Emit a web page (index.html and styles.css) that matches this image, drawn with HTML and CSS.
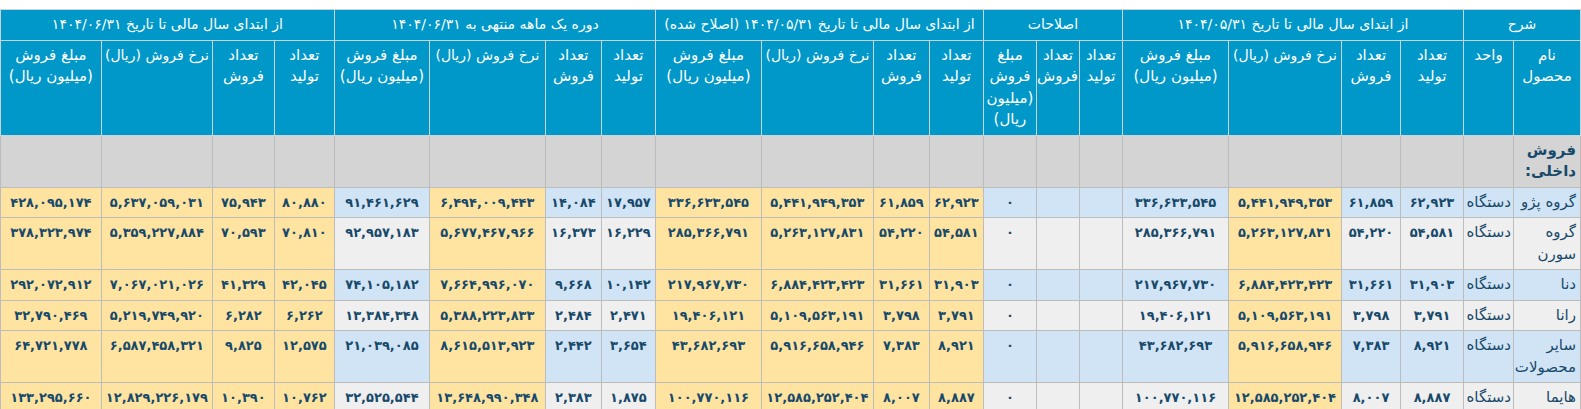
FILE: index.html
```html
<!DOCTYPE html>
<html lang="fa" dir="rtl">
<head>
<meta charset="utf-8">
<link rel="stylesheet" href="styles.css">
</head>
<body>
<div class="wrap">
<table class="sheet">
<colgroup>
<col style="width:67px"><col style="width:50px">
<col style="width:63px"><col style="width:59px"><col style="width:113px"><col style="width:106px">
<col style="width:43px"><col style="width:43px"><col style="width:53px">
<col style="width:54px"><col style="width:56px"><col style="width:112px"><col style="width:106px">
<col style="width:54px"><col style="width:56px"><col style="width:116px"><col style="width:95px">
<col style="width:60px"><col style="width:62px"><col style="width:111px"><col style="width:101px">
</colgroup>
<thead>
<tr class="h1">
<th colspan="2">شرح</th>
<th colspan="4">از ابتدای سال مالی تا تاریخ ۱۴۰۴/۰۵/۳۱</th>
<th colspan="3">اصلاحات</th>
<th colspan="4">از ابتدای سال مالی تا تاریخ ۱۴۰۴/۰۵/۳۱ (اصلاح شده)</th>
<th colspan="4">دوره یک ماهه منتهی به ۱۴۰۴/۰۶/۳۱</th>
<th colspan="4">از ابتدای سال مالی تا تاریخ ۱۴۰۴/۰۶/۳۱</th>
</tr>
<tr class="h2">
<th>نام محصول</th><th>واحد</th>
<th>تعداد تولید</th><th>تعداد فروش</th><th class="nw">نرخ فروش (ریال)</th><th>مبلغ فروش (میلیون ریال)</th>
<th>تعداد تولید</th><th>تعداد فروش</th><th>مبلغ فروش (میلیون ریال)</th>
<th>تعداد تولید</th><th>تعداد فروش</th><th class="nw">نرخ فروش (ریال)</th><th>مبلغ فروش (میلیون ریال)</th>
<th>تعداد تولید</th><th>تعداد فروش</th><th class="nw">نرخ فروش (ریال)</th><th>مبلغ فروش (میلیون ریال)</th>
<th>تعداد تولید</th><th>تعداد فروش</th><th class="nw">نرخ فروش (ریال)</th><th>مبلغ فروش (میلیون ریال)</th>
</tr>
</thead>
<tbody>
<tr class="sec">
<td class="name bold">فروش داخلی:</td><td></td>
<td></td><td></td><td></td><td></td>
<td></td><td></td><td></td>
<td></td><td></td><td></td><td></td>
<td></td><td></td><td></td><td></td>
<td></td><td></td><td></td><td></td>
</tr>
<tr class="rb">
<td class="name nw">گروه پژو</td><td class="unit">دستگاه</td>
<td>۶۲,۹۲۳</td><td>۶۱,۸۵۹</td><td class="y">۵,۴۴۱,۹۴۹,۳۵۳</td><td>۳۳۶,۶۳۳,۵۴۵</td>
<td></td><td></td><td>۰</td>
<td class="y">۶۲,۹۲۳</td><td class="y">۶۱,۸۵۹</td><td class="y">۵,۴۴۱,۹۴۹,۳۵۳</td><td class="y">۳۳۶,۶۳۳,۵۴۵</td>
<td>۱۷,۹۵۷</td><td>۱۴,۰۸۴</td><td class="y">۶,۴۹۴,۰۰۹,۴۴۳</td><td>۹۱,۴۶۱,۶۲۹</td>
<td class="y">۸۰,۸۸۰</td><td class="y">۷۵,۹۴۳</td><td class="y">۵,۶۳۷,۰۵۹,۰۳۱</td><td class="y">۴۲۸,۰۹۵,۱۷۴</td>
</tr>
<tr class="rg">
<td class="name">گروه سورن</td><td class="unit">دستگاه</td>
<td>۵۴,۵۸۱</td><td>۵۴,۲۲۰</td><td class="y">۵,۲۶۳,۱۲۷,۸۳۱</td><td>۲۸۵,۳۶۶,۷۹۱</td>
<td></td><td></td><td>۰</td>
<td class="y">۵۴,۵۸۱</td><td class="y">۵۴,۲۲۰</td><td class="y">۵,۲۶۳,۱۲۷,۸۳۱</td><td class="y">۲۸۵,۳۶۶,۷۹۱</td>
<td>۱۶,۲۲۹</td><td>۱۶,۳۷۳</td><td class="y">۵,۶۷۷,۴۶۷,۹۶۶</td><td>۹۲,۹۵۷,۱۸۳</td>
<td class="y">۷۰,۸۱۰</td><td class="y">۷۰,۵۹۳</td><td class="y">۵,۳۵۹,۲۲۷,۸۸۴</td><td class="y">۳۷۸,۳۲۳,۹۷۴</td>
</tr>
<tr class="rb">
<td class="name">دنا</td><td class="unit">دستگاه</td>
<td>۳۱,۹۰۳</td><td>۳۱,۶۶۱</td><td class="y">۶,۸۸۴,۴۲۳,۴۲۳</td><td>۲۱۷,۹۶۷,۷۳۰</td>
<td></td><td></td><td>۰</td>
<td class="y">۳۱,۹۰۳</td><td class="y">۳۱,۶۶۱</td><td class="y">۶,۸۸۴,۴۲۳,۴۲۳</td><td class="y">۲۱۷,۹۶۷,۷۳۰</td>
<td>۱۰,۱۴۲</td><td>۹,۶۶۸</td><td class="y">۷,۶۶۴,۹۹۶,۰۷۰</td><td>۷۴,۱۰۵,۱۸۲</td>
<td class="y">۴۲,۰۴۵</td><td class="y">۴۱,۳۲۹</td><td class="y">۷,۰۶۷,۰۲۱,۰۲۶</td><td class="y">۲۹۲,۰۷۲,۹۱۲</td>
</tr>
<tr class="rg">
<td class="name">رانا</td><td class="unit">دستگاه</td>
<td>۳,۷۹۱</td><td>۳,۷۹۸</td><td class="y">۵,۱۰۹,۵۶۳,۱۹۱</td><td>۱۹,۴۰۶,۱۲۱</td>
<td></td><td></td><td>۰</td>
<td class="y">۳,۷۹۱</td><td class="y">۳,۷۹۸</td><td class="y">۵,۱۰۹,۵۶۳,۱۹۱</td><td class="y">۱۹,۴۰۶,۱۲۱</td>
<td>۲,۴۷۱</td><td>۲,۴۸۴</td><td class="y">۵,۳۸۸,۲۲۳,۸۳۳</td><td>۱۳,۳۸۴,۳۴۸</td>
<td class="y">۶,۲۶۲</td><td class="y">۶,۲۸۲</td><td class="y">۵,۲۱۹,۷۴۹,۹۲۰</td><td class="y">۳۲,۷۹۰,۴۶۹</td>
</tr>
<tr class="rb">
<td class="name">سایر محصولات</td><td class="unit">دستگاه</td>
<td>۸,۹۲۱</td><td>۷,۳۸۳</td><td class="y">۵,۹۱۶,۶۵۸,۹۴۶</td><td>۴۳,۶۸۲,۶۹۳</td>
<td></td><td></td><td>۰</td>
<td class="y">۸,۹۲۱</td><td class="y">۷,۳۸۳</td><td class="y">۵,۹۱۶,۶۵۸,۹۴۶</td><td class="y">۴۳,۶۸۲,۶۹۳</td>
<td>۳,۶۵۴</td><td>۲,۴۴۲</td><td class="y">۸,۶۱۵,۵۱۳,۹۲۳</td><td>۲۱,۰۳۹,۰۸۵</td>
<td class="y">۱۲,۵۷۵</td><td class="y">۹,۸۲۵</td><td class="y">۶,۵۸۷,۴۵۸,۳۲۱</td><td class="y">۶۴,۷۲۱,۷۷۸</td>
</tr>
<tr class="rg">
<td class="name">هایما</td><td class="unit">دستگاه</td>
<td>۸,۸۸۷</td><td>۸,۰۰۷</td><td class="y">۱۲,۵۸۵,۲۵۲,۴۰۴</td><td>۱۰۰,۷۷۰,۱۱۶</td>
<td></td><td></td><td>۰</td>
<td class="y">۸,۸۸۷</td><td class="y">۸,۰۰۷</td><td class="y">۱۲,۵۸۵,۲۵۲,۴۰۴</td><td class="y">۱۰۰,۷۷۰,۱۱۶</td>
<td>۱,۸۷۵</td><td>۲,۳۸۳</td><td class="y">۱۳,۶۴۸,۹۹۰,۳۴۸</td><td>۳۲,۵۲۵,۵۴۴</td>
<td class="y">۱۰,۷۶۲</td><td class="y">۱۰,۳۹۰</td><td class="y">۱۲,۸۲۹,۲۲۶,۱۷۹</td><td class="y">۱۳۳,۲۹۵,۶۶۰</td>
</tr>
</tbody>
</table>
</div>
</body>
</html>
```

FILE: styles.css
```css
html, body {
  margin: 0;
  padding: 0;
  background: #ffffff;
}

.wrap {
  padding-top: 9px;
}

.sheet {
  border-collapse: collapse;
  table-layout: fixed;
  width: 1581px;
  font-family: "DejaVu Sans", sans-serif;
  font-size: 13px;
  font-weight: bold;
  line-height: 21.5px;
  direction: rtl;
}

.sheet th,
.sheet td {
  border: 1px solid #bcbcbc;
  padding: 4px 2px;
  vertical-align: top;
  text-align: center;
  overflow: hidden;
}

.sheet th {
  background: #0097c9;
  color: #ffffff;
  font-weight: normal;
  font-size: 15px;
  border-color: #c9d3d8;
  padding-left: 1px;
  padding-right: 1px;
}

.h1 th {
  height: 21px;
  white-space: nowrap;
  font-size: 14px;
}

.h2 th {
  height: 86px;
}

.sheet th.nw {
  font-size: 14px;
}

.sheet td {
  color: #17496a;
  height: 21px;
}

.sec td {
  background: #d4d4d4;
  height: 43px;
}

.rb td {
  background: #d1e4f5;
}

.rg td {
  background: #efefef;
}

.sheet td.y {
  background: #ffe4a1;
}

.sheet td.name {
  text-align: right;
  padding-right: 4px;
  font-size: 15px;
  font-weight: normal;
}

.sheet td.unit {
  text-align: right;
  padding-right: 2px;
  padding-left: 1px;
  font-size: 15px;
  font-weight: normal;
}

.sheet .nw {
  white-space: nowrap;
}

.sheet td.bold {
  font-weight: bold;
}
```
